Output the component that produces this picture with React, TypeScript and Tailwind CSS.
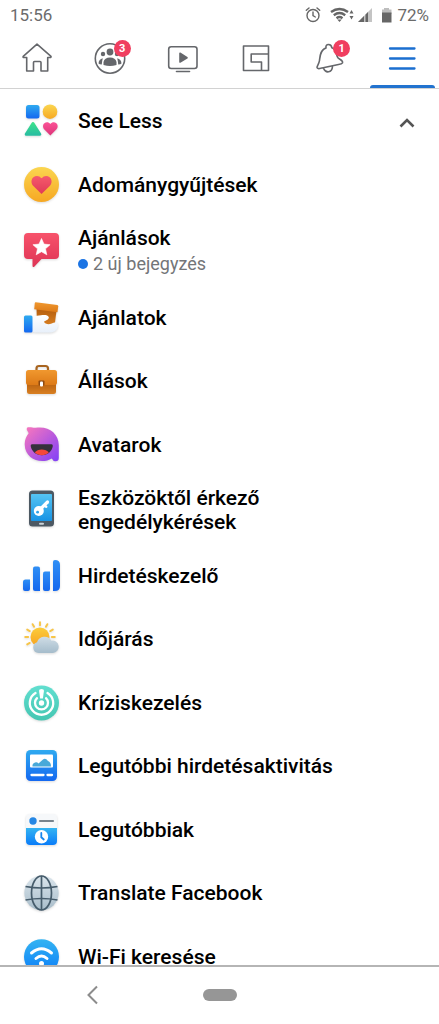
import React from "react";

type IconProps = { children: React.ReactNode };

function Art({ children }: IconProps) {
  return (
    <svg
      viewBox="0 0 36 36"
      aria-hidden="true"
      className="h-9 w-9 shrink-0 overflow-visible drop-shadow-[0_1px_1px_rgba(0,0,0,0.14)]"
    >
      {children}
    </svg>
  );
}

function Line({ children }: IconProps) {
  return (
    <svg
      viewBox="0 0 32 32"
      aria-hidden="true"
      className="h-8 w-8 overflow-visible"
      fill="none"
      stroke="#65676b"
      strokeWidth="1.6"
      strokeLinejoin="round"
      strokeLinecap="round"
    >
      {children}
    </svg>
  );
}

function Fade({ id, from, to, diagonal }: { id: string; from: string; to: string; diagonal?: boolean }) {
  return (
    <linearGradient id={id} x1="0" y1="0" x2={diagonal ? "1" : "0"} y2="1">
      <stop offset="0" stopColor={from} />
      <stop offset="1" stopColor={to} />
    </linearGradient>
  );
}

function Gradients() {
  return (
    <svg aria-hidden="true" className="absolute h-0 w-0">
      <defs>
        <Fade id="blue" from="#2faaf0" to="#1468f0" />
        <Fade id="bar" from="#2f8ff5" to="#1668ee" />
        <Fade id="sky" from="#34b4f2" to="#0a7cf8" />
        <Fade id="yellow" from="#fbd650" to="#f6a823" />
        <Fade id="sun" from="#fbcd3c" to="#f8a21e" />
        <Fade id="green" from="#3be08c" to="#29bfa0" />
        <Fade id="pink" from="#fb5296" to="#dd3579" />
        <Fade id="red" from="#f65a6c" to="#e03a57" />
        <Fade id="bubble" from="#f7536b" to="#de3455" />
        <Fade id="orange" from="#f0982f" to="#dd7a17" />
        <Fade id="brown" from="#b35c0c" to="#d98022" />
        <Fade id="hand" from="#ffffff" to="#e8f0fa" />
        <Fade id="avatar" from="#fb78bc" to="#8040f8" diagonal />
        <Fade id="screen" from="#55c4f2" to="#1893e4" />
        <Fade id="cloud" from="#cfdde6" to="#a5bccb" />
        <Fade id="mint" from="#62dfd0" to="#44c6b2" />
        <Fade id="globe" from="#dae5ec" to="#a9bdca" />
      </defs>
    </svg>
  );
}

const heart =
  "M12 21.2 3.1 12.4C.3 9.5.5 5 3.2 2.9 6 .7 9.700 1.200 12 4.200 14.300 1.200 18 .7 20.800 2.900 23.500 5 23.700 9.500 20.900 12.400Z";

function ShapesIcon() {
  return (
    <Art>
      <rect x="3" y="2" width="13.500" height="13.500" rx="2.500" fill="url(#blue)" />
      <circle cx="27" cy="8.700" r="7.300" fill="url(#yellow)" />
      <path d="M10 20.500 16.800 31.200H3.200Z" fill="url(#green)" stroke="url(#green)" strokeWidth="3" strokeLinejoin="round" />
      <path d={heart} transform="translate(19.300 18.200) scale(.67)" fill="url(#pink)" />
    </Art>
  );
}

function FundraiserIcon() {
  return (
    <Art>
      <circle cx="18.500" cy="17.500" r="17.500" fill="url(#yellow)" />
      <path d={heart} transform="translate(7.500 7.500) scale(.92)" fill="url(#red)" />
    </Art>
  );
}

function RecommendIcon() {
  return (
    <Art>
      <path d="M5 0H32a4 4 0 0 1 4 4V22a4 4 0 0 1-4 4H18.500L11.500 33.500Q9.500 35 9.500 32.500V26H5a4 4 0 0 1-4-4V4a4 4 0 0 1 4-4Z" fill="url(#bubble)" />
      <path d="m18.500 5.500 2.500 5.600 6.100.6-4.600 4.100 1.300 6-5.300-3.100-5.300 3.100 1.300-6-4.600-4.100 6.100-.6Z" fill="#fff" stroke="#fff" strokeWidth=".6" strokeLinejoin="round" />
    </Art>
  );
}

function OfferIcon() {
  return (
    <Art>
      <path d="M13.500 8 33.500 11 31.500 26 14 25Z" fill="url(#brown)" />
      <path d="M12.800 2.200 34.300 5Q35.300 5.200 35.200 6.200L34.500 12.200 11.200 9.200 11.800 3Q11.900 2.100 12.800 2.200Z" fill="url(#orange)" />
      <path d="M9 16.300C13 16 15 15.600 18 15.200 21 14.600 25.300 14.800 25.800 17.300 26 19.500 23 20.700 21 21.500 21.500 24 25.500 24.700 28 23.800 30.500 22.500 34.500 21.300 34.800 23.300 36 28 33 32 28 32.500H12L9 31.500Z" fill="url(#hand)" />
      <rect x="1" y="15.500" width="8.500" height="17" rx="1.500" fill="url(#blue)" />
    </Art>
  );
}

function BriefcaseIcon() {
  return (
    <Art>
      <path d="M13.500 8V5.500Q13.500 3 16 3H22.500Q25 3 25 5.500V8" fill="none" stroke="#a8641f" strokeWidth="2.200" />
      <path d="M4 18H33V28.500a2.500 2.500 0 0 1-2.500 2.500H6.500A2.500 2.500 0 0 1 4 28.500Z" fill="url(#brown)" />
      <path d="M5.500 7H31.500a2.500 2.500 0 0 1 2.500 2.500V19.500a2.500 2.500 0 0 1-2.500 2.500H5.500A2.500 2.500 0 0 1 3 19.500V9.500A2.500 2.500 0 0 1 5.500 7Z" fill="url(#orange)" />
      <rect x="15.500" y="17.500" width="6" height="5" rx="1" fill="#8d4a12" />
      <rect x="17" y="18.500" width="3" height="5" rx="1" fill="#fff" />
    </Art>
  );
}

function AvatarIcon() {
  return (
    <Art>
      <path d="M5 .3C8 -.3 10 1 12.500.8 25 -1.500 36 6 35.800 18.500V31Q35.800 34.200 32.500 34.200 30 34.200 28.800 31.500C19 37.500 2 33 1.700 17.500 1.600 12.500 3.500 9 5.500 6.500 5.800 4.800 3.800 4 3.700 2Q3.700.6 5 .3Z" fill="url(#avatar)" />
      <path d="M9 17.300H28.500Q30 17.300 29.800 19C29 24.500 24.500 28.200 18.800 28.200S8.600 24.500 7.700 19Q7.500 17.300 9 17.300Z" fill="#35313c" />
      <path d="M11.800 25.500C14.500 21.500 23 21.500 25.800 25.500 21.500 29.200 15.800 29 11.800 25.500Z" fill="#f5483a" />
    </Art>
  );
}

function PhoneKeyIcon() {
  return (
    <Art>
      <rect x="6" y="-1.500" width="25" height="36" rx="3.500" fill="#4d5963" />
      <rect x="8" y="2" width="21" height="27" rx=".8" fill="url(#screen)" />
      <rect x="16" y="30.700" width="5" height="2" rx="1" fill="#cbd3d9" />
      <circle cx="15.800" cy="19" r="5" fill="#fff" />
      <circle cx="14.600" cy="20.200" r="1.400" fill="#2ea3e8" />
      <path d="m18 16.500 6.500-6.500" stroke="#fff" strokeWidth="3.200" strokeLinecap="round" fill="none" />
      <path d="m21.800 13.500 1.500 1.300" stroke="#fff" strokeWidth="2.400" strokeLinecap="round" fill="none" />
    </Art>
  );
}

function BarsIcon() {
  return (
    <Art>
      <path d="M0 24Q0 21.500 2.500 21.500H7V31Q7 33 5 33H2Q0 33 0 31Z" fill="url(#bar)" />
      <path d="M10 10.500Q10 8.500 12 8.500H15Q17 8.500 17 10.500V33H12Q10 33 10 31Z" fill="url(#bar)" />
      <path d="M20 15.500Q20 13.500 22 13.500H27V31Q27 33 25 33H22Q20 33 20 31Z" fill="url(#bar)" />
      <path d="M30 4Q30 2 32 2 37 2 37 7V28Q37 33 32 33H30Z" fill="url(#bar)" />
    </Art>
  );
}

function WeatherIcon() {
  return (
    <Art>
      <g stroke="#f7c548" strokeWidth="1.900" strokeLinecap="round">
        {[-120, -90, -60, -30, 0, 30, 60, 90].map((a) => (
          <path key={a} d="M17 4.200V1.200" transform={`rotate(${a} 17 16)`} />
        ))}
      </g>
      <circle cx="17" cy="16" r="9.500" fill="url(#sun)" />
      <path d="M15.500 32a5.500 5.500 0 0 1-1.500-10.700A8 8 0 0 1 28.500 19.700 6.200 6.200 0 1 1 30 32Z" fill="url(#cloud)" />
    </Art>
  );
}

function CrisisIcon() {
  return (
    <Art>
      <circle cx="18.500" cy="18" r="17.500" fill="url(#mint)" />
      <g fill="none" stroke="#fff" strokeWidth="2.300" strokeLinecap="round">
        <path d="M12.500 8A11.700 11.700 0 1 0 24.500 8" />
        <path d="M14 13.200A6.500 6.500 0 1 0 23 13.200" />
      </g>
      <path d="M16 5.500Q16 4 18.500 4T21 5.500L19.900 13.500H17.100Z" fill="#fff" />
      <circle cx="18.500" cy="18" r="2.700" fill="#fff" />
    </Art>
  );
}

function AdActivityIcon() {
  return (
    <Art>
      <rect x="3" y="2" width="31" height="31" rx="4.500" fill="url(#blue)" />
      <rect x="7" y="6.500" width="23" height="13" rx="1" fill="#fff" />
      <path d="M9.500 18.500Q9 15.500 12 14.500 14 13.700 15.500 15.500L20 11.500Q22.500 9.500 25 13 28 14 28 18.500Z" fill="#48a9d9" />
      <path d="M8.500 27H20.500M24.500 27H29" stroke="#fff" strokeWidth="2.300" strokeLinecap="round" />
    </Art>
  );
}

function RecentIcon() {
  return (
    <Art>
      <rect x="3" y="2" width="31" height="31" rx="4" fill="#f6f8fa" />
      <path d="M3 16H34V29a4 4 0 0 1-4 4H7a4 4 0 0 1-4-4Z" fill="url(#sky)" />
      <circle cx="10" cy="9" r="3.700" fill="#2687e4" />
      <path d="M17 9H30" stroke="#77838d" strokeWidth="2.200" strokeLinecap="round" />
      <circle cx="18.500" cy="24.700" r="6.700" fill="#fff" />
      <path d="M18.300 21V25.300L20.800 27.500" fill="none" stroke="#1685ee" strokeWidth="1.800" strokeLinecap="round" />
    </Art>
  );
}

function GlobeIcon() {
  return (
    <Art>
      <circle cx="18.500" cy="18" r="17.200" fill="url(#globe)" />
      <g fill="none" stroke="#465c6b" strokeWidth="1.700">
        <path d="M18.500.8V35.200" />
        <ellipse cx="18.500" cy="18" rx="10" ry="17" />
        <path d="M2.500 11.500Q18.500 14.500 34.500 11.500M2.500 25Q18.500 22 34.500 25" />
      </g>
    </Art>
  );
}

function WifiSearchIcon() {
  return (
    <Art>
      <circle cx="18.500" cy="17.700" r="17.500" fill="url(#sky)" />
      <g fill="none" stroke="#fff" strokeWidth="3" strokeLinecap="round">
        <path d="M8.500 14Q18.500 5.500 28.500 14" />
        <path d="M13 19.500Q18.500 14.500 24 19.500" />
      </g>
      <circle cx="18.500" cy="24.500" r="2.500" fill="#fff" />
    </Art>
  );
}

type Entry = { label: string; note?: string; tall?: boolean; Icon: () => React.ReactElement };

const entries: Entry[] = [
  { label: "Adománygyűjtések", Icon: FundraiserIcon },
  { label: "Ajánlások", note: "2 új bejegyzés", Icon: RecommendIcon },
  { label: "Ajánlatok", Icon: OfferIcon },
  { label: "Állások", Icon: BriefcaseIcon },
  { label: "Avatarok", Icon: AvatarIcon },
  { label: "Eszközöktől érkező engedélykérések", tall: true, Icon: PhoneKeyIcon },
  { label: "Hirdetéskezelő", Icon: BarsIcon },
  { label: "Időjárás", Icon: WeatherIcon },
  { label: "Kríziskezelés", Icon: CrisisIcon },
  { label: "Legutóbbi hirdetésaktivitás", Icon: AdActivityIcon },
  { label: "Legutóbbiak", Icon: RecentIcon },
  { label: "Translate Facebook", Icon: GlobeIcon },
  { label: "Wi-Fi keresése", Icon: WifiSearchIcon },
];

function StatusBar() {
  return (
    <div className="flex h-[30px] shrink-0 items-center justify-between px-2.5 text-[17px] leading-5 text-[#6b6b6b]">
      <span>15:56</span>
      <div className="flex items-center">
        <svg viewBox="0 0 92 20" aria-hidden="true" className="h-5 w-[92px]">
          <g fill="none" stroke="#666" strokeWidth="1.400" strokeLinecap="round">
            <circle cx="8" cy="10.500" r="6" />
            <path d="M8 7V10.700L10.300 12M1.300 5.300 4 3M14.700 5.300 12 3" />
          </g>
          <g fill="none" stroke="#666" strokeWidth="2.400">
            <path d="M26 7Q34.500 .8 43 7M28.800 10.200Q34.500 6 40.200 10.200M31.500 13.200Q34.500 11 37.500 13.200" />
          </g>
          <path d="M32.300 14.500H36.700L34.500 17ZM44.500 8.500 46.500 5 48.500 8.500ZM44.500 11H48.500L46.500 14.500Z" fill="#666" />
          <path d="M53 17 67 3V17Z" fill="#c4c4c4" />
          <path d="M53 17 59 11V17ZM60.500 17V9.500L63 7V17Z" fill="#666" />
          <path d="M79 3H84V4.500H86.500V9H77V4.500H79Z" fill="#bdbdbd" />
          <path d="M77 7.500H86.500V17.500H77Z" fill="#666" />
        </svg>
        <span>72%</span>
      </div>
    </div>
  );
}

function Badge({ count }: { count: number }) {
  return (
    <span className="absolute -top-0.5 left-1/2 ml-1 flex h-[17px] w-[17px] items-center justify-center rounded-full bg-[#f03e5f] text-[11px] leading-none font-bold text-white">
      {count}
    </span>
  );
}

const tabs = [
  {
    name: "Home",
    icon: (
      <Line>
        <path d="M16 2.200 30 14.300Q30.300 15.500 29 15.500H26.700V29H20V20.500Q20 19.500 19 19.500H13.500Q12.500 19.500 12.500 20.500V29H5.700V15.500H3Q1.700 15.500 2.200 14.300Z" />
      </Line>
    ),
  },
  {
    name: "Groups",
    badge: 3,
    icon: (
      <Line>
        <circle cx="16" cy="16.500" r="14.700" />
        <g fill="#65676b" stroke="none">
          <circle cx="16" cy="10" r="3.400" />
          <circle cx="9" cy="12" r="2.200" />
          <circle cx="23" cy="12" r="2.200" />
          <path d="M9.500 23V20Q10.500 15.500 16 15.500T22.500 20V23Q19 24 16 24T9.500 23ZM4.500 21.500Q4.800 17 8.800 16.200 8 19 7.800 22.500 5.500 22.500 4.500 21.500ZM27.500 21.500Q27.200 17 23.200 16.200 24 19 24.200 22.500 26.500 22.500 27.500 21.500Z" />
        </g>
      </Line>
    ),
  },
  {
    name: "Watch",
    icon: (
      <Line>
        <rect x="1.700" y="4.700" width="28.300" height="21.800" rx="2.500" />
        <path d="M9.500 29.500H22.500" />
        <path d="M13 11.300 20 15.700 13 20Z" fill="#65676b" stroke="#65676b" />
      </Line>
    ),
  },
  {
    name: "Gaming",
    icon: (
      <Line>
        <path d="M3.500 4H28.500V28.500H3.500ZM28.500 12H11.200V20H21.500V28.500" />
      </Line>
    ),
  },
  {
    name: "Notifications",
    badge: 1,
    icon: (
      <Line>
        <path d="M13 6Q12.500 2.500 15.500 2.500T18.800 5.800C24.500 7.500 22.500 13 25 15.800 27.500 18 30.300 18.800 29.500 20.800 28.800 22 27 22.300 25.500 22.500L9 26C7 26.500 4.200 27.300 4 25.500 4 23.500 6 22 6.500 18.500 7 14.500 7 8 13 6ZM10.500 26.200C12.500 31.500 19 31 19.500 24.500" />
      </Line>
    ),
  },
  {
    name: "Menu",
    active: true,
    icon: (
      <Line>
        <path d="M4 6.500H28.500M4 16.500H28.500M4 26.500H28.500" stroke="#1b6fd0" strokeWidth="2.300" />
      </Line>
    ),
  },
];

const row = "flex w-full items-center gap-[19px] pr-6 pl-[23px] text-left";

export default function App() {
  const [open, setOpen] = React.useState(true);
  return (
    <div className="flex h-screen flex-col overflow-hidden bg-white font-['Roboto',sans-serif] text-black">
      <Gradients />
      <StatusBar />
      <nav className="grid h-[59px] shrink-0 grid-cols-6 border-b border-[#d2d2d2]">
        {tabs.map((tab) => (
          <button
            key={tab.name}
            type="button"
            aria-label={tab.name}
            className="relative flex items-center justify-center pb-0.5"
          >
            <span className="relative flex">
              {tab.icon}
              {tab.badge && <Badge count={tab.badge} />}
            </span>
            {tab.active && (
              <span className="absolute inset-x-1 bottom-0 h-[3px] rounded-t-sm bg-[#2273cf]" />
            )}
          </button>
        ))}
      </nav>
      <main className="min-h-0 flex-1 overflow-y-auto [scrollbar-width:none]">
        <ul>
          <li className="flex min-h-[64px]">
            <button type="button" aria-expanded={open} onClick={() => setOpen(!open)} className={row}>
              <ShapesIcon />
              <span className="flex-1 text-[21px] leading-6 font-medium">See Less</span>
              <svg viewBox="0 0 16 16" aria-hidden="true" className="h-4 w-4" fill="none" stroke="#555" strokeWidth="2.600">
                <path d="M1.500 13.500 8 7 14.500 13.500" />
              </svg>
            </button>
          </li>
          {open &&
            entries.map(({ label, note, tall, Icon }) => (
              <li
                key={label}
                className={
                  note
                    ? "flex min-h-[70px]"
                    : tall
                      ? "flex min-h-[68px]"
                      : "flex odd:min-h-[64px] even:min-h-[63px]"
                }
              >
                <a href="#" className={row}>
                  <Icon />
                  <span className="max-w-[270px]">
                    <span className="block text-[21px] leading-6 font-medium">{label}</span>
                    {note && (
                      <span className="mt-0.5 flex items-center gap-[5px] text-[18px] leading-6 text-[#737578]">
                        <span className="h-2.5 w-2.5 rounded-full bg-[#1b74e4]" />
                        {note}
                      </span>
                    )}
                  </span>
                </a>
              </li>
            ))}
        </ul>
      </main>
      <footer className="grid h-[59px] shrink-0 grid-cols-[1fr_auto_1fr] items-center border-t-2 border-[#b5b5b5] bg-white pb-0.5">
        <button type="button" aria-label="Back" className="flex justify-center pr-4">
          <svg viewBox="0 0 20 20" aria-hidden="true" className="h-5 w-5" fill="none" stroke="#8c8c8c" strokeWidth="2">
            <path d="M14 1.500 5.500 10 14 18.500" />
          </svg>
        </button>
        <button type="button" aria-label="Home screen" className="h-3 w-[34px] rounded-full bg-[#969696]" />
      </footer>
    </div>
  );
}
